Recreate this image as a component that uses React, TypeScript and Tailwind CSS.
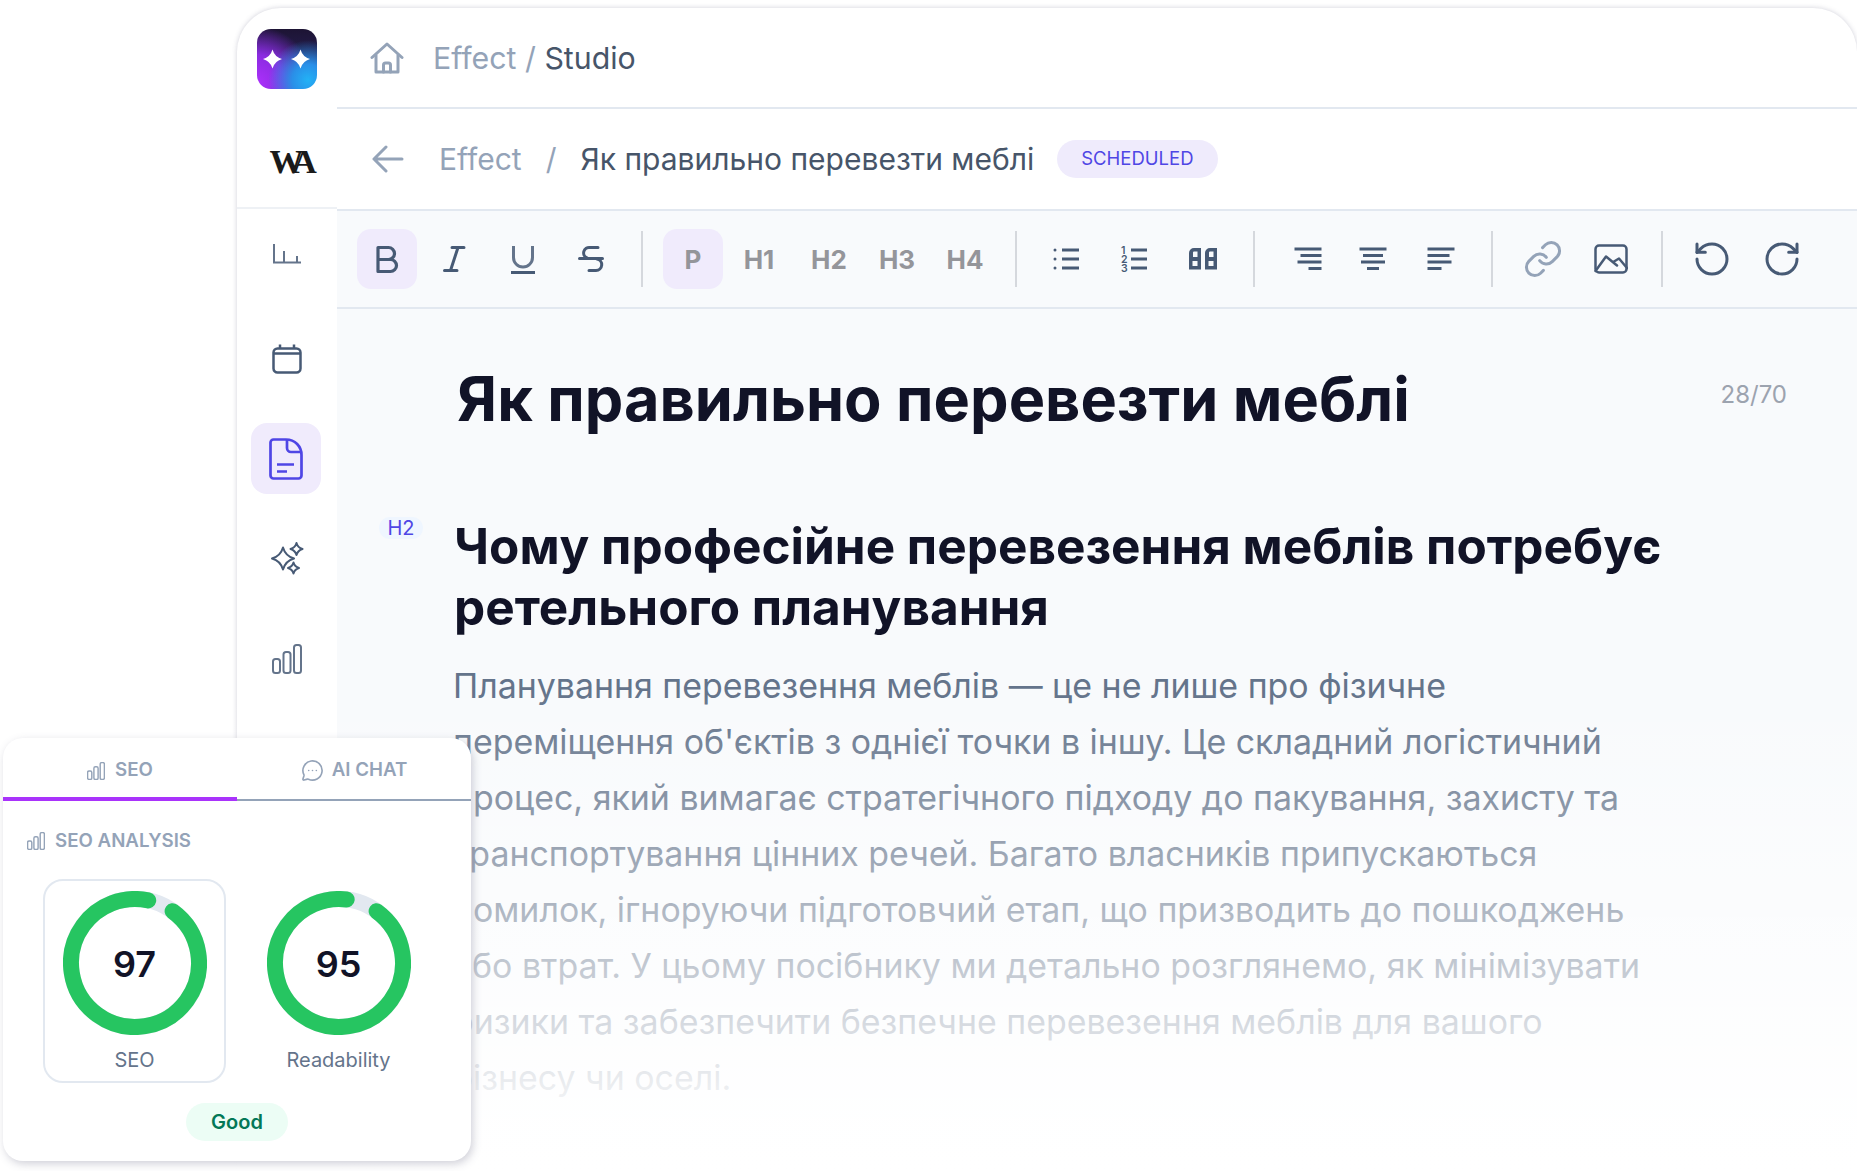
import { MessageCircleMore, RotateCcw, RotateCw } from "lucide-react";

const FONT = "font-['Inter','Noto_Sans',sans-serif]";

function Bars({ size, stroke, width }: { size: number; stroke: string; width: number }) {
  return (
    <svg width={size} height={size} viewBox="0 0 30 30" fill="none" stroke={stroke} strokeWidth={width}>
      <rect x="1" y="15" width="7" height="14" rx="2.5" />
      <rect x="11.5" y="8" width="7" height="21" rx="2.5" />
      <rect x="22" y="1" width="7" height="28" rx="2.5" />
    </svg>
  );
}

function Star({ cx, cy, r }: { cx: number; cy: number; r: number }) {
  const d = r * 0.22;
  return (
    <path
      d={`M${cx} ${cy - r}Q${cx + d} ${cy - d} ${cx + r} ${cy}Q${cx + d} ${cy + d} ${cx} ${cy + r}Q${cx - d} ${cy + d} ${cx - r} ${cy}Q${cx - d} ${cy - d} ${cx} ${cy - r}Z`}
    />
  );
}

function ToolButton({ active, children }: { active?: boolean; children: React.ReactNode }) {
  return (
    <div
      className={`w-[60px] h-[60px] shrink-0 rounded-[14px] flex items-center justify-center ${
        active ? "bg-[#f0ebfc]" : ""
      }`}
    >
      {children}
    </div>
  );
}

function Sep() {
  return <div className="w-[2px] h-[56px] shrink-0 mx-[12px] bg-[#d5d8dd]" />;
}

function Heading({ label }: { label: string }) {
  return (
    <ToolButton>
      <span className="text-[26px] leading-[32px] mt-[2px] font-bold text-[#94959a]">{label}</span>
    </ToolButton>
  );
}

function AlignIcon({ widths, align }: { widths: number[]; align: "l" | "c" | "r" }) {
  const ys = [2, 8.5, 15, 21.5];
  return (
    <svg width="28" height="24" viewBox="0 0 28 24" fill="#475a75">
      {widths.map((w, i) => {
        const x = align === "l" ? 0.5 : align === "r" ? 27.5 - w : 14 - w / 2;
        return <rect key={i} x={x} y={ys[i] - 1.5} width={w} height="3" />;
      })}
    </svg>
  );
}

function Ring({ value, pct, label, boxed }: { value: number; pct: number; label: string; boxed?: boolean }) {
  return (
    <div
      className={`w-[183px] h-[204px] flex flex-col items-center pt-[10px] rounded-[20px] border-2 ${
        boxed ? "border-[#e2e8f0]" : "border-transparent"
      }`}
    >
      <div className="relative w-[144px] h-[144px]">
        <svg width="144" height="144" viewBox="0 0 144 144" fill="none">
          <circle cx="72" cy="72" r="64" stroke="#e2e8f0" strokeWidth="16" />
          <circle
            cx="72"
            cy="72"
            r="64"
            stroke="#26c561"
            strokeWidth="16"
            strokeLinecap="round"
            pathLength={100}
            strokeDasharray={`${pct} 100`}
            transform="rotate(-54 72 72)"
          />
        </svg>
        <div className="absolute inset-0 pt-[2px] flex items-center justify-center text-[36px] font-semibold text-[#111327]">
          {value}
        </div>
      </div>
      <div className="mt-[12px] text-[20px] leading-[26px] text-[#64748b]">{label}</div>
    </div>
  );
}

export default function App() {
  return (
    <div className={`relative w-[1865px] h-[1171px] overflow-hidden bg-white ${FONT}`}>
      {/* editor window, cut off at its right edge like the source image */}
      <div className="w-[1857px] h-[1171px] overflow-hidden pl-[237px] pt-[8px]">
        <div className="w-[1620px] h-[1163px] flex rounded-t-[44px] bg-white shadow-[0_0_5px_rgba(100,100,130,0.3)] overflow-hidden">
          <aside className="w-[100px] shrink-0 flex flex-col">
            <div className="h-[201px] border-b-2 border-[#eef1f5] flex flex-col items-center">
              <div className="mt-[21px] w-[60px] h-[60px] rounded-[14px] flex items-center justify-center bg-[radial-gradient(circle_at_85%_85%,#22b2f6_0%,#2a8fe8_22%,transparent_55%),radial-gradient(circle_at_0%_90%,#ac30fb_0%,#8a2be0_35%,transparent_70%),linear-gradient(180deg,#1d1434_0%,#241d4d_45%,#2a3f86_100%)]">
                <svg width="48" height="20" viewBox="0 0 48 20" fill="#fff">
                  <Star cx={9.5} cy={10} r={9.5} />
                  <Star cx={37.5} cy={10} r={9.5} />
                </svg>
              </div>
              <div className="mt-[56px] ml-[5px] font-['Liberation_Serif',serif] font-bold text-[34px] leading-[34px] tracking-[-7.5px] text-[#1a1a1a]">
                WA
              </div>
            </div>
            <nav className="mt-[14px] flex flex-col items-center gap-[29px]">
              <div className="w-[70px] h-[71px] flex items-start justify-center pt-[21px]">
                <svg width="30" height="20" viewBox="0 0 30 20" fill="none" stroke="#64748b" strokeWidth="2">
                  <path d="M2 0V18.5H29M12 7V18.5M25 12V18.5" />
                </svg>
              </div>
              <div className="w-[70px] h-[71px] flex items-center justify-center">
                <svg width="30" height="30" viewBox="0 0 30 30" fill="none" stroke="#475a75" strokeWidth="2.5">
                  <rect x="1.5" y="4.5" width="27" height="24" rx="4" />
                  <path d="M1.5 9.5H28.5M8 0.5V5M22 0.5V5" />
                </svg>
              </div>
              <div className="w-[70px] h-[71px] -ml-[2px] rounded-[16px] bg-[#f0ebfc] flex items-center justify-center">
                <svg width="34" height="42" viewBox="0 0 34 42" fill="none" stroke="#4f46e5" strokeWidth="2.7" strokeLinejoin="round">
                  <path d="M1.5 4.5a3 3 0 0 1 3-3H17c9 0 15.5 7 15.5 15.5V37.5a3 3 0 0 1-3 3H4.500a3 3 0 0 1-3-3Z" />
                  <path d="M18 1.500V10a4 4 0 0 0 4 4H32.500" />
                  <path d="M8 26.500H25M8 33.500H18" />
                </svg>
              </div>
              <div className="w-[70px] h-[71px] flex items-center justify-center">
                <svg width="33" height="33" viewBox="0 0 33 33" fill="none" stroke="#475a75" strokeWidth="2" strokeLinejoin="round">
                  <Star cx={12} cy={16.500} r={11} />
                  <Star cx={25.500} cy={7} r={6} />
                  <Star cx={22.500} cy={26} r={5.500} />
                </svg>
              </div>
              <div className="w-[70px] h-[71px] flex items-center justify-center">
                <Bars size={30} stroke="#64748b" width={2} />
              </div>
            </nav>
          </aside>

          <main className="flex-1 min-w-0 flex flex-col">
            <div className="h-[101px] shrink-0 border-b-2 border-[#e2e8f0] flex items-center pl-[33px] pt-[1px]">
              <svg width="34" height="32" viewBox="0 0 34 32" fill="none" stroke="#94a3b8" strokeWidth="3" strokeLinejoin="round" strokeLinecap="round">
                <path d="M2 15.500L17 2L32 15.500" />
                <path d="M6 13V30H28V13" />
                <path d="M13.500 30V23a2 2 0 0 1 2-2h3a2 2 0 0 1 2 2V30" />
              </svg>
              <div className="ml-[29px] text-[30.3px] leading-[40px] text-[#94a3b8]">
                Effect / <span className="text-[#475569]">Studio</span>
              </div>
            </div>

            <div className="h-[102px] shrink-0 border-b-2 border-[#e2e8f0] flex items-center pl-[35px]">
              <svg width="32" height="28" viewBox="0 0 32 28" fill="none" stroke="#94a3b8" strokeWidth="3" strokeLinecap="round" strokeLinejoin="round">
                <path d="M2 14H30M14 2L2 14L14 26" />
              </svg>
              <span className="ml-[35px] text-[30px] leading-[40px] text-[#94a3b8]">Effect</span>
              <span className="ml-[24px] text-[30px] leading-[40px] text-[#94a3b8]">/</span>
              <span className="ml-[24px] text-[30px] leading-[40px] text-[#475569]">Як правильно перевезти меблі</span>
              <span className="ml-[23px] h-[38px] px-[24px] rounded-full bg-[#efebfc] flex items-center text-[18.5px] text-[#4f46e5]">
                SCHEDULED
              </span>
            </div>

            <div className="h-[98px] shrink-0 border-b-2 border-[#e2e8f0] bg-[#f8fafc] flex items-center gap-[8px] pl-[20px]">
              <ToolButton active>
                <svg width="32" height="32" viewBox="0 0 32 32" fill="none" stroke="#475a75" strokeWidth="3.2" strokeLinejoin="round">
                  <path d="M7 4.500H17.500a6 6 0 0 1 0 12H7ZM7 16.500H19.500a6 6 0 0 1 0 12H7Z" />
                </svg>
              </ToolButton>
              <ToolButton>
                <svg width="32" height="32" viewBox="0 0 32 32" fill="none" stroke="#475a75" strokeWidth="3" strokeLinecap="round">
                  <path d="M13 4.500H25M5.500 27.500H18M19 4.500L11.500 27.500" />
                </svg>
              </ToolButton>
              <ToolButton>
                <svg width="32" height="32" viewBox="0 0 32 32" fill="none" stroke="#475a75" strokeWidth="3">
                  <path d="M6.500 3V14.500a9.500 9.500 0 0 0 19 0V3" stroke="#64748b" />
                  <path d="M4 29.500H28" />
                </svg>
              </ToolButton>
              <ToolButton>
                <svg width="32" height="32" viewBox="0 0 32 32" fill="none" stroke="#475a75" strokeWidth="3" strokeLinecap="round">
                  <path d="M23 4.500H15a5.500 5.500 0 0 0-3 10.500" />
                  <path d="M4.500 15.500H27.500" />
                  <path d="M22 16a5.800 5.800 0 0 1-1 11.500H14" />
                </svg>
              </ToolButton>
              <Sep />
              <ToolButton active>
                <span className="text-[26px] leading-[32px] mt-[2px] font-bold text-[#94959a]">P</span>
              </ToolButton>
              <ToolButton>
                <span className="text-[26px] leading-[32px] mt-[2px] -ml-[4px] font-bold text-[#94959a]">H1</span>
              </ToolButton>
              <Heading label="H2" />
              <Heading label="H3" />
              <Heading label="H4" />
              <Sep />
              <ToolButton>
                <svg width="28" height="24" viewBox="0 0 28 24" fill="#475a75">
                  <circle cx="2" cy="3" r="1.500" />
                  <circle cx="2" cy="12" r="1.500" />
                  <circle cx="2" cy="21" r="1.500" />
                  <rect x="9" y="1.500" width="17" height="3" />
                  <rect x="9" y="10.500" width="17" height="3" />
                  <rect x="9" y="19.500" width="17" height="3" />
                </svg>
              </ToolButton>
              <ToolButton>
                <svg width="28" height="28" viewBox="0 0 28 28" fill="#475a75" fontFamily="Inter, sans-serif" fontSize="10.500" fontWeight="600" className="overflow-visible">
                  <text x="0" y="9">1</text>
                  <text x="0" y="18">2</text>
                  <text x="0" y="27">3</text>
                  <rect x="10" y="3.500" width="16" height="3" />
                  <rect x="10" y="12.500" width="16" height="3" />
                  <rect x="10" y="21.500" width="16" height="3" />
                </svg>
              </ToolButton>
              <ToolButton>
                <svg width="28" height="22" viewBox="0 0 28 22" fill="#475a75" fillRule="evenodd">
                  <path d="M0 5a5 5 0 0 1 5-5h7v21.500H0ZM3.500 13v5h5v-5ZM4 4.500a1 1 0 0 1 1-1h3.500V9H4Z" />
                  <path d="M16 5a5 5 0 0 1 5-5h7v21.500H16ZM19.500 13v5h5v-5ZM20 4.500a1 1 0 0 1 1-1h3.500V9H20Z" />
                </svg>
              </ToolButton>
              <Sep />
              <ToolButton>
                <span className="ml-[6px] flex">
                  <AlignIcon widths={[27, 21, 24, 13]} align="r" />
                </span>
              </ToolButton>
              <ToolButton>
                <AlignIcon widths={[27, 20, 24, 12]} align="c" />
              </ToolButton>
              <ToolButton>
                <AlignIcon widths={[27, 22, 24, 14]} align="l" />
              </ToolButton>
              <Sep />
              <ToolButton>
                <svg width="40" height="40" viewBox="0 0 24 24" fill="none" stroke="#94a3b8" strokeWidth="1.800" strokeLinecap="round" strokeLinejoin="round">
                  <path d="M10 13a5 5 0 0 0 7.540.540l3-3a5 5 0 0 0-7.070-7.070l-1.720 1.710" />
                  <path d="M14 11a5 5 0 0 0-7.540-.540l-3 3a5 5 0 0 0 7.070 7.070l1.710-1.710" />
                </svg>
              </ToolButton>
              <ToolButton>
                <svg width="34" height="30" viewBox="0 0 34 30" fill="none" stroke="#475a75" strokeWidth="2.500" strokeLinejoin="round" strokeLinecap="round">
                  <rect x="1.500" y="1.500" width="31" height="27" rx="3.500" />
                  <path d="M1.500 27L12 12.500L23 21.500" />
                  <path d="M20 17.500L25 14.500L33 24" />
                </svg>
              </ToolButton>
              <Sep />
              <ToolButton>
                <span className="-ml-[3px] flex">
                  <RotateCcw size={40} strokeWidth={1.8} color="#475a75" />
                </span>
              </ToolButton>
              <ToolButton>
                <span className="ml-[1px] flex">
                  <RotateCw size={40} strokeWidth={1.8} color="#475a75" />
                </span>
              </ToolButton>
            </div>

            <div className="flex-1 bg-[#f8fafc] relative">
              <div className="flex pl-[120px] pr-[70px] pt-[54px] items-center">
                <h1 className="flex-1 text-[61.2px] leading-[72px] font-bold text-[#111327]">
                  Як правильно перевезти меблі
                </h1>
                <span className="text-[24px] text-[#9ca3af] -mt-[8px]">28/70</span>
              </div>
              <div className="absolute left-[42px] top-[208px] h-[22px] w-[44px] rounded-full bg-[#eff6ff] flex items-center justify-center text-[20px] text-[#4f46e5]">
                H2
              </div>
              <h2 className="mt-[81px] ml-[117px] w-[1260px] text-[49.5px] leading-[61px] font-bold text-[#111327]">
                Чому професійне перевезення меблів потребує ретельного планування
              </h2>
              <p className="mt-[20px] ml-[116px] w-[1210px] text-[33.9px] leading-[56px] text-[#64748b]">
                Планування перевезення меблів — це не лише про фізичне переміщення об'єктів з однієї точки в іншу. Це складний логістичний процес, який вимагає стратегічного підходу до пакування, захисту та транспортування цінних речей. Багато власників припускаються помилок, ігноруючи підготовчий етап, що призводить до пошкоджень або втрат. У цьому посібнику ми детально розглянемо, як мінімізувати ризики та забезпечити безпечне перевезення меблів для вашого бізнесу чи оселі.
              </p>
            </div>
          </main>
        </div>
      </div>

      {/* fade over the bottom of the window */}
      <div className="absolute left-0 right-0 top-[690px] bottom-0 bg-[linear-gradient(180deg,rgba(255,255,255,0)_0%,rgba(255,255,255,0.9)_85%,#fff_100%)]" />

      {/* SEO panel */}
      <div className="absolute left-[3px] top-[738px] w-[468px] h-[423px] rounded-[20px] bg-white shadow-[2px_3px_8px_rgba(90,90,120,0.28)]">
        <div className="flex h-[63px] items-end">
          <div className="flex-1 h-[63px] border-b-4 border-[#a933fb] flex items-center justify-center gap-[10px] text-[18.7px] font-semibold text-[#94a3b8] pt-[6px]">
            <Bars size={18} stroke="#94a3b8" width={2.4} />
            SEO
          </div>
          <div className="flex-1 h-[63px] border-b-2 border-[#94a3b8] flex items-center justify-center gap-[8px] text-[18.7px] font-semibold text-[#94a3b8] pt-[4px]">
            <MessageCircleMore size={23} strokeWidth={1.7} color="#94a3b8" />
            AI CHAT
          </div>
        </div>
        <div className="mt-[29px] ml-[24px] flex items-center gap-[10px] text-[18.7px] leading-[22px] font-semibold text-[#94a3b8]">
          <Bars size={18} stroke="#94a3b8" width={2.4} />
          SEO ANALYSIS
        </div>
        <div className="mt-[27px] ml-[40px] flex gap-[21px]">
          <Ring value={97} pct={93.3} label="SEO" boxed />
          <Ring value={95} pct={91.9} label="Readability" />
        </div>
        <div className="mt-[20px] flex justify-center">
          <div className="h-[38px] px-[25px] rounded-full bg-[#ecfdf5] flex items-center text-[20px] font-semibold text-[#047857]">
            Good
          </div>
        </div>
      </div>
    </div>
  );
}
